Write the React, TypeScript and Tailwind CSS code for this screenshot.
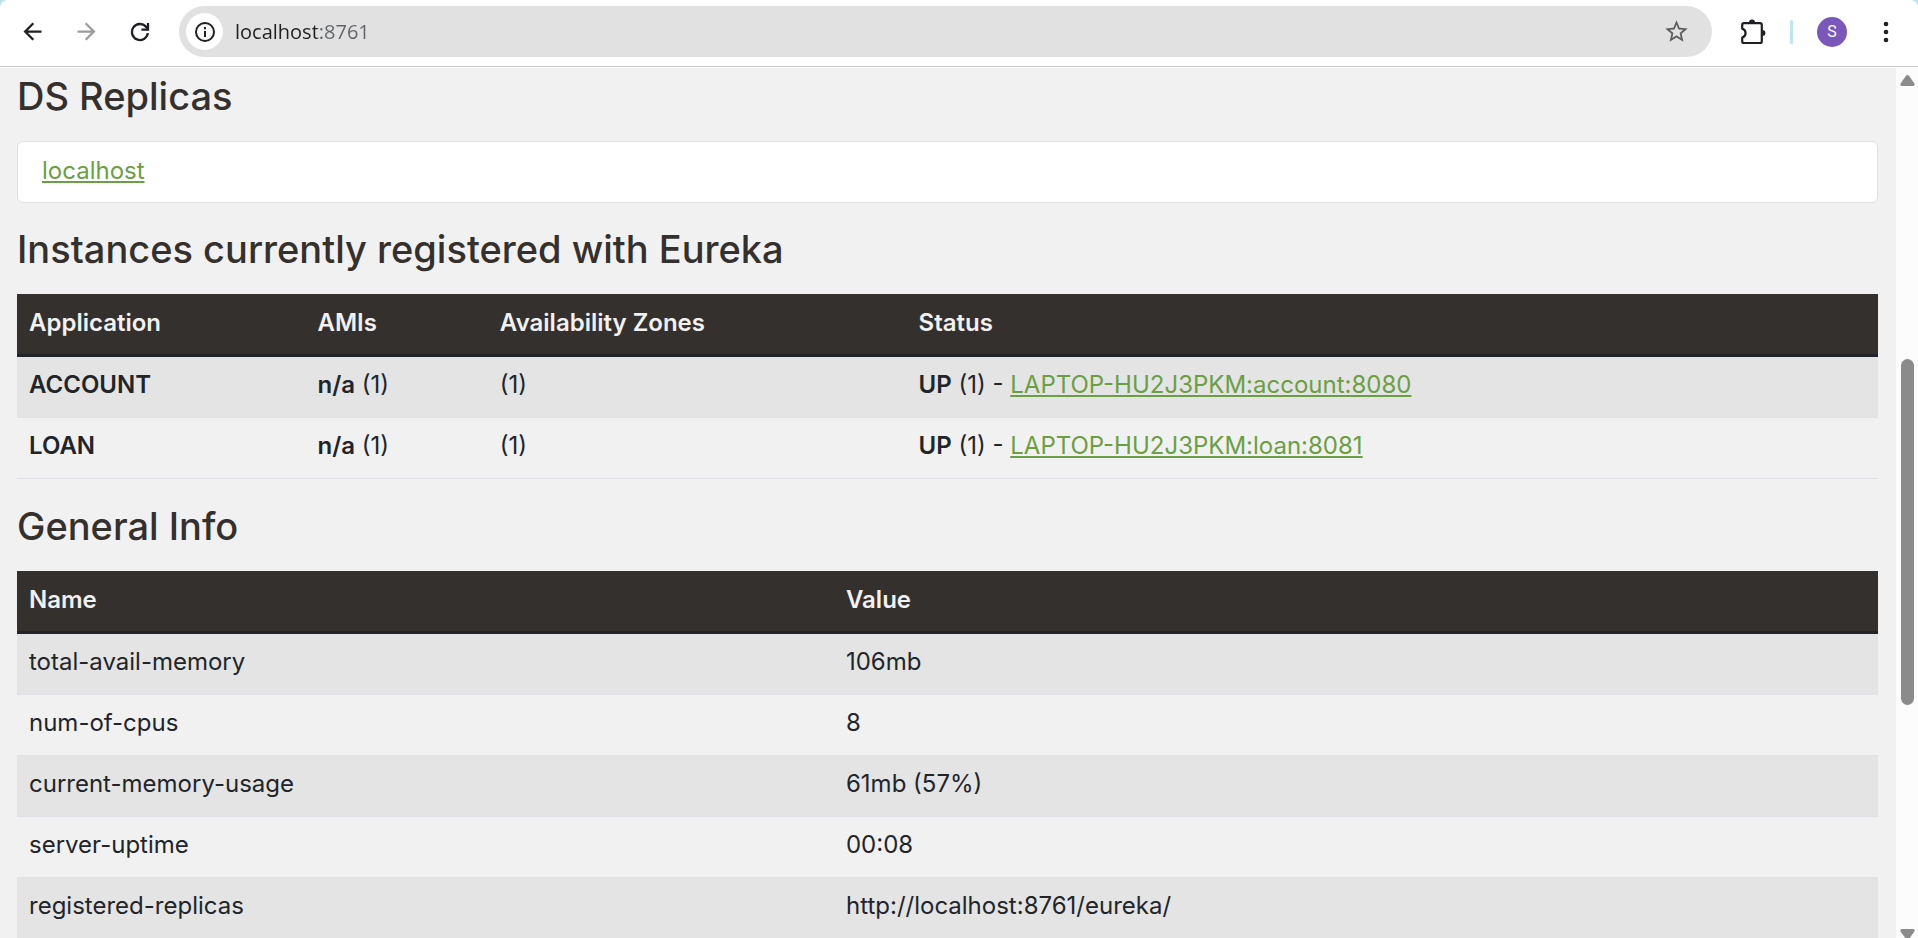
import type { ReactNode } from "react";

type Instance = { name: string; zone: string; link: string };

const instances: Instance[] = [
  { name: "ACCOUNT", zone: "(1)", link: "LAPTOP-HU2J3PKM:account:8080" },
  { name: "LOAN", zone: "(1)", link: "LAPTOP-HU2J3PKM:loan:8081" },
];

const generalInfo: [string, string][] = [
  ["total-avail-memory", "106mb"],
  ["num-of-cpus", "8"],
  ["current-memory-usage", "61mb (57%)"],
  ["server-uptime", "00:08"],
  ["registered-replicas", "http://localhost:8761/eureka/"],
];

function ToolbarButton({ label, children }: { label: string; children: ReactNode }) {
  return (
    <button type="button" aria-label={label} className="flex h-full w-[54px] items-center justify-center">
      {children}
    </button>
  );
}

function Toolbar() {
  return (
    <div className="bg-[#bfe5f0]">
      <header className="flex h-[67px] items-center rounded-t-lg border-b border-[#c8c8c8] bg-white px-[5px] pt-[6px] pb-[9px] text-[#1f1f24]">
        <ToolbarButton label="Back">
          <svg className="size-[27px]" viewBox="0 0 24 24" fill="currentColor">
            <path d="M20 11H7.83l5.59-5.59L12 4l-8 8 8 8 1.41-1.41L7.83 13H20v-2z" />
          </svg>
        </ToolbarButton>
        <ToolbarButton label="Forward">
          <svg className="size-[27px] text-[#9b9b9b]" viewBox="0 0 24 24" fill="currentColor">
            <path d="M12 4l-1.41 1.41L16.17 11H4v2h12.17l-5.58 5.59L12 20l8-8z" />
          </svg>
        </ToolbarButton>
        <ToolbarButton label="Reload">
          <svg className="size-5" viewBox="0 0 20 20" fill="none" stroke="currentColor" strokeWidth="2.3">
            <path d="M17.9 11.2A8 8 0 1 1 15.9 4.6L18 7" />
            <path d="M18 1V7.7H11.4" />
          </svg>
        </ToolbarButton>
        <div className="ml-3 flex h-[51px] min-w-0 flex-1 items-center rounded-full bg-[#e1e1e1] pr-[22px] pl-[7px]">
          <button
            type="button"
            aria-label="View site information"
            className="flex size-[37px] shrink-0 items-center justify-center rounded-full bg-white"
          >
            <svg className="size-5" viewBox="0 0 20 20" fill="none" stroke="currentColor" strokeWidth="2">
              <circle cx="10" cy="10" r="9" />
              <path d="M10 9V15M10 5V7.2" />
            </svg>
          </button>
          <input
            aria-label="Address"
            defaultValue="localhost:8761"
            className="ml-3 min-w-0 flex-1 bg-[linear-gradient(90deg,#1f1f1f_82px,#5f6368_82px)] bg-clip-text font-['Open_Sans',sans-serif] text-[20px] leading-7 text-transparent outline-none"
          />
          <button type="button" aria-label="Bookmark this tab" className="shrink-0 text-[#5e5e5e]">
            <svg className="size-[27px]" viewBox="0 0 24 24" fill="currentColor">
              <path d="M22 9.24l-7.19-.62L12 2 9.19 8.63 2 9.24l5.46 4.73L5.82 21 12 17.27 18.18 21l-1.63-7.03L22 9.24zM12 15.4l-3.76 2.27 1-4.28-3.32-2.88 4.38-.38L12 6.1l1.71 4.04 4.38.38-3.32 2.88 1 4.28L12 15.4z" />
            </svg>
          </button>
        </div>
        <button type="button" aria-label="Extensions" className="ml-7 shrink-0">
          <svg className="size-[26px]" viewBox="0 0 26 26">
            <path
              d="M4 4.200H20Q21.800 4.200 21.800 6V22.200Q21.800 24 20 24H4Q2.200 24 2.200 22.200V18.600Q5.600 17.400 5.600 14.100Q5.600 10.800 2.200 9.600V6Q2.200 4.200 4 4.200Z"
              fill="none"
              stroke="currentColor"
              strokeWidth="2.2"
              strokeLinejoin="round"
            />
            <path d="M9 3.600a3 3 0 0 1 6 0zM22.400 11a3 3 0 0 1 0 6z" fill="currentColor" />
          </svg>
        </button>
        <span className="ml-6 h-6 w-[3px] shrink-0 rounded-full bg-[#bfe5f0]" />
        <button
          type="button"
          aria-label="Profile"
          className="ml-6 flex size-[30px] shrink-0 items-center justify-center rounded-full bg-[#7a57bb] font-['Roboto',sans-serif] text-[16px] leading-5 text-white"
        >
          S
        </button>
        <div className="ml-3 h-full">
          <ToolbarButton label="Menu">
            <svg className="h-6 w-2" viewBox="0 0 8 24" fill="currentColor">
              <circle cx="4" cy="4" r="2.300" />
              <circle cx="4" cy="12" r="2.300" />
              <circle cx="4" cy="20" r="2.300" />
            </svg>
          </ToolbarButton>
        </div>
      </header>
    </div>
  );
}

function Heading({ children }: { children: ReactNode }) {
  return <h1 className="mb-[23px] text-[38px] leading-[44px] font-medium text-[#34302d]">{children}</h1>;
}

function HeadRow({ columns }: { columns: { label: string; width: string }[] }) {
  return (
    <thead className="border-b-3 border-[#212529] bg-[#34302d] text-[#f1f1f1]">
      <tr>
        {columns.map((c) => (
          <th key={c.label} scope="col" className={`${c.width} px-3 pt-[11px] pb-[13px] text-left font-semibold`}>
            {c.label}
          </th>
        ))}
      </tr>
    </thead>
  );
}

function Cell({ children }: { children: ReactNode }) {
  return <td className="px-3 pt-[10px] pb-[14px]">{children}</td>;
}

const rowStyle = "border-b border-[#dee2e6] odd:bg-[#e4e4e4]";
const tableStyle = "mb-px w-full table-fixed border-collapse";
const linkStyle = "text-[#6a9f43] underline decoration-2 underline-offset-2";

function Scrollbar() {
  return (
    <div aria-hidden="true" className="flex w-[22px] shrink-0 flex-col items-center bg-[#fcfcfc] pt-[7px] text-[#8b8b8b]">
      <svg className="h-[11px] w-[15px] shrink-0" viewBox="0 0 15 11" fill="currentColor">
        <path d="M6 .8Q7.500-.8 9 .8L14.400 8.500Q15.200 11 13 11H2Q-.2 11 .6 8.500Z" />
      </svg>
      <div className="flex-[273]" />
      <div className="w-[13px] flex-[346] rounded-full bg-[#8b8b8b]" />
      <div className="flex-[224]" />
      <svg className="h-[9px] w-[15px] shrink-0" viewBox="0 0 15 9" fill="currentColor">
        <path d="M2 0H13Q15.200 0 14.400 2.500L9.700 9H5.300L.6 2.500Q-.2 0 2 0Z" />
      </svg>
    </div>
  );
}

export default function App() {
  return (
    <div className="flex h-screen flex-col overflow-hidden bg-white font-['Inter',sans-serif]">
      <Toolbar />
      <div className="mt-px flex min-h-0 flex-1">
        <main className="min-w-0 flex-1 overflow-hidden bg-[#f1f1f1] pt-[6px] pr-[18px] pl-[17px] text-[24px] leading-9 text-[#212529]">
          <section className="pb-6">
            <Heading>DS Replicas</Heading>
            <ul className="rounded-md border border-[#dfdfdf] bg-white pt-[11px] pr-6 pb-[13px] pl-6">
              <li>
                <a href="#localhost" className={linkStyle}>
                  localhost
                </a>
              </li>
            </ul>
          </section>
          <section className="pb-6">
            <Heading>Instances currently registered with Eureka</Heading>
            <table className={tableStyle}>
              <HeadRow
                columns={[
                  { label: "Application", width: "w-[15.5%]" },
                  { label: "AMIs", width: "w-[9.8%]" },
                  { label: "Availability Zones", width: "w-[22.5%]" },
                  { label: "Status", width: "w-auto" },
                ]}
              />
              <tbody>
                {instances.map((row) => (
                  <tr key={row.name} className={rowStyle}>
                    <Cell>
                      <b className="font-semibold">{row.name}</b>
                    </Cell>
                    <Cell>
                      <b className="font-semibold">n/a</b> (1)
                    </Cell>
                    <Cell>{row.zone}</Cell>
                    <Cell>
                      <b className="font-semibold">UP</b> (1) -{" "}
                      <a href="#status" className={linkStyle}>
                        {row.link}
                      </a>
                    </Cell>
                  </tr>
                ))}
              </tbody>
            </table>
          </section>
          <section>
            <Heading>General Info</Heading>
            <table className={tableStyle}>
              <HeadRow
                columns={[
                  { label: "Name", width: "w-[43.9%]" },
                  { label: "Value", width: "w-auto" },
                ]}
              />
              <tbody>
                {generalInfo.map(([name, value]) => (
                  <tr key={name} className={rowStyle}>
                    <Cell>{name}</Cell>
                    <Cell>{value}</Cell>
                  </tr>
                ))}
              </tbody>
            </table>
          </section>
        </main>
        <Scrollbar />
      </div>
    </div>
  );
}
